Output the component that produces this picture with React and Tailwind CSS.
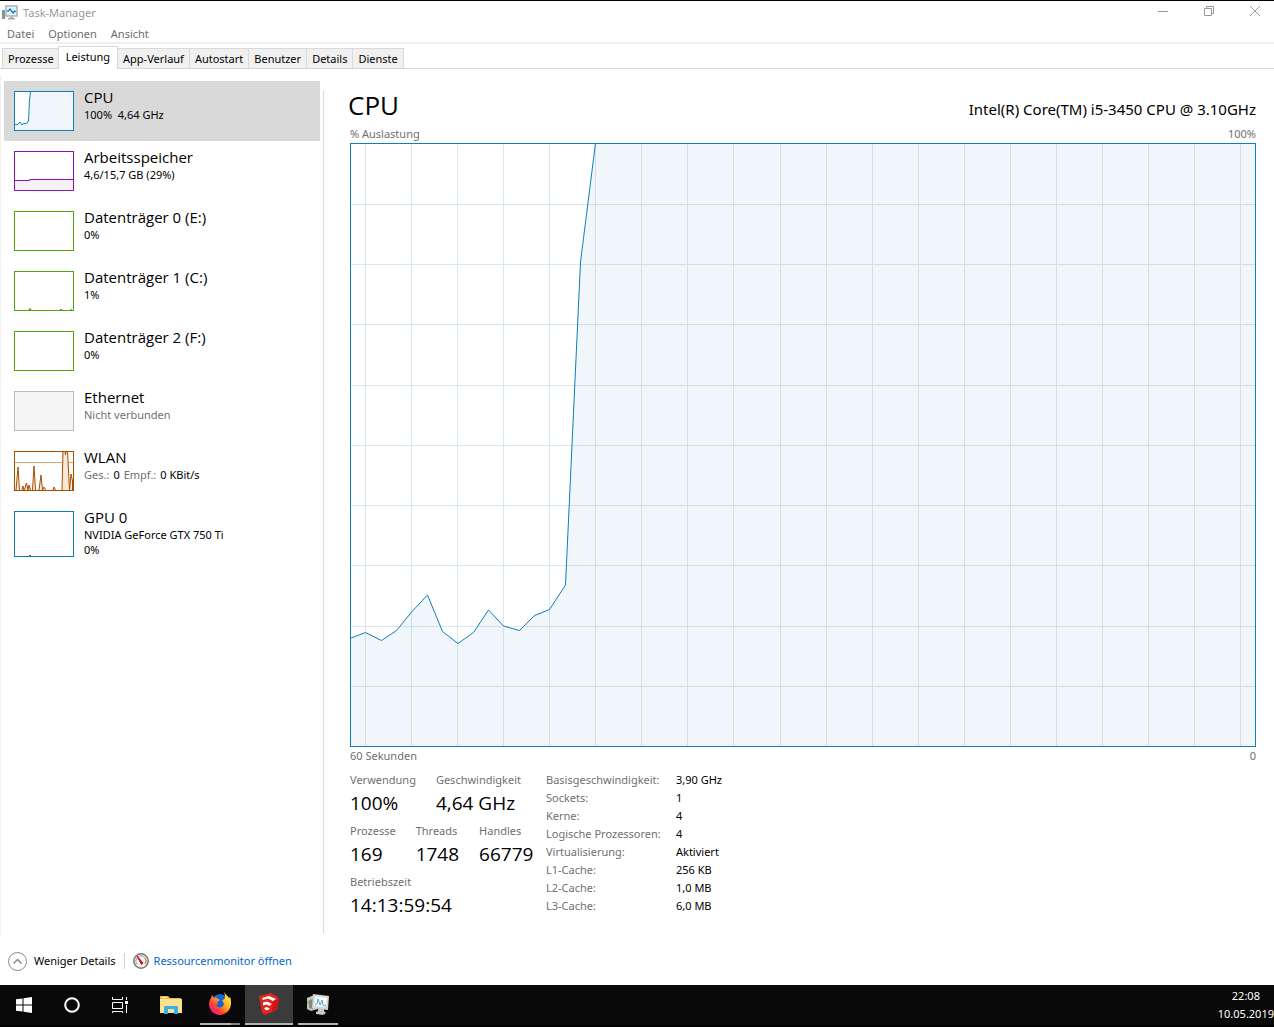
import { useState } from "react";

const tabs = ["Prozesse", "Leistung", "App-Verlauf", "Autostart", "Benutzer", "Details", "Dienste"];

const verticalLines = Array.from({ length: 20 }, (_, i) => Math.floor(14.3 + i * 46.08) + 0.5);
const horizontalLines = Array.from({ length: 9 }, (_, i) => Math.floor(60.3 + i * 60.25) + 0.5);

const cpuLine =
  "0,494 14.5,488.5 30.5,496.5 45.5,486.5 61,467.5 76.5,451 91.5,487.5 107,499.5 122.5,488.5 137.5,466 152.5,482 168.5,486.5 183.5,471.5 198.5,465.5 214.5,441 229.5,118 244.5,-1";

const items = [
  { id: "cpu", title: "CPU", sub: "100%  4,64 GHz", border: "border-[#117dbb]" },
  { id: "ram", title: "Arbeitsspeicher", sub: "4,6/15,7 GB (29%)", border: "border-[#8b12ae]" },
  { id: "disk0", title: "Datenträger 0 (E:)", sub: "0%", border: "border-[#4da60c]" },
  { id: "disk1", title: "Datenträger 1 (C:)", sub: "1%", border: "border-[#4da60c]" },
  { id: "disk2", title: "Datenträger 2 (F:)", sub: "0%", border: "border-[#4da60c]" },
  { id: "eth", title: "Ethernet", sub: "Nicht verbunden", border: "border-[#bcbcbc]", muted: true },
  { id: "wlan", title: "WLAN", border: "border-[#a74f01]" },
  { id: "gpu", title: "GPU 0", sub: "NVIDIA GeForce GTX 750 Ti", extra: "0%", border: "border-[#117dbb]" },
];

const details = [
  ["Basisgeschwindigkeit:", "3,90 GHz"],
  ["Sockets:", "1"],
  ["Kerne:", "4"],
  ["Logische Prozessoren:", "4"],
  ["Virtualisierung:", "Aktiviert"],
  ["L1-Cache:", "256 KB"],
  ["L2-Cache:", "1,0 MB"],
  ["L3-Cache:", "6,0 MB"],
];

const MiniChart = ({ id }) => (
  <svg viewBox="0 0 58 38" className="block h-[38px] w-full" aria-hidden="true">
    {id === "cpu" && (
      <>
        <path d="M0 32L1 31 3 32 5 29 6 32 8 30 9 32 11 31 12 31 13 30 14 29 15 8 16 0H58V38H0Z" fill="#f1f6fa" />
        <path d="M0 32L2 33 5 30 7 33 9 31 10 32 12 31 13.500 29 14.500 8 15.500 0" fill="none" stroke="#117dbb" />
      </>
    )}
    {id === "ram" && (
      <>
        <path d="M0 28.5H14.5V27.5H58V38H0Z" fill="#f4f2f4" />
        <path d="M0 28.5H14.5V27.5H58" fill="none" stroke="#8b12ae" />
      </>
    )}
    {id === "disk1" && <path d="M13.5 38L15 35.5 16.5 38ZM45 38V37H47V38ZM55 38L56 36.5 57 38Z" fill="#4da60c" />}
    {id === "wlan" && (
      <>
        <path d="M0 10.5H58" stroke="#d3a680" />
        <path
          d="M1 38L3 15 4.500 38M7 38L8 34 9 38 10 36 11.500 31 13 38 14 33 15.500 38M17.500 38L19 14 20.500 38M24 38L26 23 27.500 38 29 35 30.500 38M38 38L39 35 40.500 38M47 38L48 -1H50L50.500 3 51 -1H52.500L54.500 38 56 22 57.500 29V38"
          fill="#f8e8d8"
          stroke="#a74f01"
        />
      </>
    )}
    {id === "gpu" && <path d="M14 38V37H16V38Z" fill="#117dbb" />}
  </svg>
);

const CpuGraph = () => (
  <div className="relative min-h-[300px] flex-1 border border-[#117dbb]">
    <svg
      viewBox="0 0 904 602"
      preserveAspectRatio="none"
      className="absolute inset-0 h-full w-full"
      role="img"
      aria-label="CPU % Auslastung"
    >
      <g stroke="#d9e9f3" shapeRendering="crispEdges">
        {verticalLines.map((x) => (
          <line key={x} x1={x} x2={x} y1="0" y2="602" />
        ))}
        {horizontalLines.map((y) => (
          <line key={y} x1="0" x2="904" y1={y} y2={y} />
        ))}
      </g>
      <polygon points={`0,602 ${cpuLine} 904,-1 904,602`} fill="#0f6cae" fillOpacity="0.062" />
      <polyline points={cpuLine} fill="none" stroke="#117dbb" vectorEffect="non-scaling-stroke" />
    </svg>
  </div>
);

const TaskManagerIcon = ({ className }) => (
  <svg viewBox="0 0 16 16" className={className} aria-hidden="true">
    <path d="M0 5H3V14H0Z" fill="#8b9093" />
    <path d="M1 6H2V8H1Z" fill="#5fc04f" />
    <path d="M4 1H15V11H4Z" fill="#e6f4fa" stroke="#a9b1b5" strokeWidth="1.500" />
    <path d="M5 6H6.500L8 4 11 8 12.500 6 14 7" fill="none" stroke="#2089c4" strokeWidth="1.400" />
    <path d="M8 12H11V13H13V14.500H6V13H8Z" fill="#a3a8ab" />
  </svg>
);

const ExplorerIcon = () => (
  <svg viewBox="0 0 22 20" className="h-5 w-[22px]" aria-hidden="true">
    <path d="M0 1H8L10 3H21V18H0Z" fill="#e9b94a" />
    <path d="M0 4H22V18H0Z" fill="#fce18f" />
    <path d="M2 2H7V3H2Z" fill="#fff6d0" />
    <path d="M4 19V12L5 11H17L18 12V19H14V14H8V19Z" fill="#36b0e8" />
  </svg>
);

const FirefoxIcon = () => (
  <svg viewBox="0 0 24 24" className="h-6 w-6" aria-hidden="true">
    <defs>
      <linearGradient id="fox" x1="0.9" y1="0.1" x2="0.15" y2="0.9">
        <stop offset="0" stopColor="#fff044" />
        <stop offset="0.4" stopColor="#ffb020" />
        <stop offset="0.7" stopColor="#ff4a30" />
        <stop offset="1" stopColor="#f0127a" />
      </linearGradient>
    </defs>
    <circle cx="12" cy="11" r="9" fill="#1764d8" />
    <path
      d="M16 0C18 3 20 4 21 6L22 5C24 10 23 15 21 18 18 22 14 23 11 23 5 22 1 18 1 12 1 9 2 7 3 6L4 3 6 6C8 5 9 6 10 7L12 8 9 10 10 12 8 13C9 16 14 16 15 14 17 12 15 10 14 8 17 8 18 5 16 0Z"
      fill="url(#fox)"
    />
  </svg>
);

const SketchupIcon = () => (
  <svg viewBox="0 0 22 24" className="h-6 w-[22px]" aria-hidden="true">
    <path d="M1 4L13 1 21 6 19 18 7 23 4 21Z" fill="#e2231f" />
    <path d="M21 6L19 18 14 20 15 10Z" fill="#c91418" />
    <path d="M4 6L11 4 18 7 15 9 10 6.500 5 8ZM5 10.500L9 9.500 14 12 11 14 9 12.500 5 13.500ZM6 16L9 15 12 17 8 18.500Z" fill="#fff" />
  </svg>
);

const MonitorIcon = () => (
  <svg viewBox="0 0 24 24" className="h-6 w-6" aria-hidden="true">
    <path d="M1 6L8 3 12 17 5 19 1 17Z" fill="#c5c5c5" />
    <path d="M3 8L7 7V17L3 16Z" fill="#858585" />
    <path d="M1 9H3V12H1Z" fill="#80cc42" />
    <path d="M7 2L23 4 22 18 6 16Z" fill="#d6d6d4" />
    <path d="M9 4L21 6 20 15 8 14Z" fill="#f6fbfd" />
    <path d="M9 13L11 12 12 7 14 13 16 8 17 13 20 14" fill="none" stroke="#57a5cf" />
    <path d="M12 17L18 17 18 19 20 21 17 23 10 22 10 20 12 19Z" fill="#c8c8c8" />
  </svg>
);

const Stat = ({ label, value }) => (
  <div>
    <dt className="leading-[18px] text-[#707070]">{label}</dt>
    <dd className="mt-[2px] font-['Open_Sans',sans-serif] text-[19px] leading-6">{value}</dd>
  </div>
);

const App = () => {
  const [activeTab, setActiveTab] = useState("Leistung");
  const [selected, setSelected] = useState("cpu");

  return (
    <div className="flex min-h-screen flex-col border-t border-black bg-white font-['Noto_Sans',sans-serif] text-[11px] leading-[18px] text-black">
      {/* Title bar */}
      <header className="flex h-6 items-center pl-[2px] text-[#999]">
        <TaskManagerIcon className="h-4 w-4" />
        <h1 className="ml-[5px] flex-1 text-[11px]">Task-Manager</h1>
        <div className="flex gap-4 self-start pr-1">
          <button aria-label="Minimieren" className="flex h-5 w-[30px] items-center justify-center">
            <svg viewBox="0 0 10 10" className="h-[10px] w-[10px]" stroke="#999">
              <path d="M0 5.500H10" />
            </svg>
          </button>
          <button aria-label="Verkleinern" className="flex h-5 w-[30px] items-center justify-center">
            <svg viewBox="0 0 10 10" className="h-[10px] w-[10px]" fill="none" stroke="#999">
              <path d="M0.500 2.500H7.500V9.500H0.500ZM2.500 2.500V0.500H9.500V7.500H7.500" />
            </svg>
          </button>
          <button aria-label="Schließen" className="flex h-5 w-[30px] items-center justify-center">
            <svg viewBox="0 0 10 10" className="h-[10px] w-[10px]" stroke="#999">
              <path d="M0 0L10 10M10 0L0 10" />
            </svg>
          </button>
        </div>
      </header>

      {/* Menu */}
      <nav className="flex h-[19px] items-center gap-[14px] border-b-2 border-[#f0f0f0] pl-[7px] text-[#6d6d6d]">
        <button>Datei</button>
        <button>Optionen</button>
        <button>Ansicht</button>
      </nav>

      {/* Tabs */}
      <div role="tablist" className="flex h-[25px] items-end border-b border-[#d9d9d9] pl-[2px]">
        {tabs.map((tab) => (
          <button
            key={tab}
            role="tab"
            aria-selected={activeTab === tab}
            onClick={() => setActiveTab(tab)}
            className={
              activeTab === tab
                ? "relative -mb-px -ml-[2px] h-[23px] border border-b-0 border-[#d9d9d9] bg-white px-[7px] pb-[2px]"
                : "h-5 border-t border-r border-[#d9d9d9] bg-[#f0f0f0] px-[5px] first:border-l"
            }
          >
            {tab}
          </button>
        ))}
      </div>

      <main className="mt-[6px] flex flex-1 border-l border-[#f0f0f0]">
        {/* Devices */}
        <aside className="w-[319px] shrink-0 pt-[6px] pl-[3px]">
          {items.map((item) => (
            <button
              key={item.id}
              onClick={() => setSelected(item.id)}
              className={`flex min-h-[60px] w-full items-start gap-[10px] pt-[10px] pl-[10px] text-left ${
                selected === item.id ? "bg-[#d9d9d9]" : ""
              }`}
            >
              <span
                className={`flex w-[60px] shrink-0 items-end border ${item.extra ? "h-[46px]" : "h-10"} ${item.border} ${
                  item.muted ? "bg-[#f5f5f5]" : "bg-white"
                }`}
              >
                <MiniChart id={item.id} />
              </span>
              <span className="flex flex-col whitespace-pre">
                <span className="-mt-1 font-['Open_Sans',sans-serif] text-[15px] leading-5">{item.title}</span>
                <span className={`leading-[15px] ${item.muted ? "text-[#707070]" : ""}`}>
                  {item.sub || (
                    <span className="flex gap-1">
                      <span className="text-[#707070]">Ges.:</span>
                      <span>0</span>
                      <span className="text-[#707070]">Empf.:</span>
                      <span>0 KBit/s</span>
                    </span>
                  )}
                </span>
                {item.extra && <span className="leading-[15px]">{item.extra}</span>}
              </span>
            </button>
          ))}
        </aside>

        {/* CPU details */}
        <section className="mt-4 mb-1 ml-[3px] flex flex-1 flex-col border-l border-[#d9d9d9] pr-[18px] pl-[26px]">
          <div className="flex h-[34px] items-start justify-between">
            <h2 className="-ml-[2px] font-['Open_Sans',sans-serif] text-[26px] leading-7">CPU</h2>
            <p className="pt-[9px] text-[15px]">Intel(R) Core(TM) i5-3450 CPU @ 3.10GHz</p>
          </div>
          <div className="flex justify-between text-[#707070]">
            <span>% Auslastung</span>
            <span>100%</span>
          </div>
          <CpuGraph />
          <div className="flex justify-between text-[#707070]">
            <span>60 Sekunden</span>
            <span>0</span>
          </div>

          <div className="mt-[6px] flex h-[162px] items-start">
            <div className="flex w-[196px] flex-col gap-[7px]">
              <dl className="flex gap-5">
                <Stat label="Verwendung" value="100%" />
                <Stat label="Geschwindigkeit" value="4,64 GHz" />
              </dl>
              <dl className="flex gap-5">
                <Stat label="Prozesse" value="169" />
                <Stat label="Threads" value="1748" />
                <Stat label="Handles" value="66779" />
              </dl>
              <dl>
                <Stat label="Betriebszeit" value="14:13:59:54" />
              </dl>
            </div>
            <table>
              <tbody>
                {details.map(([label, value]) => (
                  <tr key={label}>
                    <th scope="row" className="w-[130px] p-0 text-left font-normal text-[#707070]">
                      {label}
                    </th>
                    <td className="p-0">{value}</td>
                  </tr>
                ))}
              </tbody>
            </table>
          </div>
        </section>
      </main>

      {/* Footer */}
      <footer className="flex h-12 items-center pl-2">
        <button className="flex items-center gap-[7px]">
          <svg viewBox="0 0 19 19" className="h-[19px] w-[19px]" fill="none" stroke="#8a8a8a" aria-hidden="true">
            <circle cx="9.5" cy="9.5" r="9" />
            <path d="M5.500 11.500L9.500 7.500 13.500 11.500" strokeWidth="1.500" />
          </svg>
          Weniger Details
        </button>
        <span className="mx-2 h-4 w-px bg-[#d0d0d0]" />
        <a href="#resmon" className="flex items-center gap-[5px] text-[#0066cc]">
          <svg viewBox="0 0 16 16" className="h-4 w-4" aria-hidden="true">
            <circle cx="8" cy="8" r="7.200" fill="#f4f4f4" stroke="#777" strokeWidth="1.500" />
            <path d="M4 11A5 5 0 1 1 12 11" fill="none" stroke="#9a9a9a" />
            <path d="M12 5A5 5 0 0 1 12 11" fill="none" stroke="#e38b52" />
            <path d="M4 3L10 10 8.500 11.500Z" fill="#d01018" stroke="#d01018" />
          </svg>
          Ressourcenmonitor öffnen
        </a>
      </footer>

      {/* Taskbar */}
      <div className="flex h-[42px] items-stretch justify-between border-b-2 border-black bg-[#090909] text-white">
        <div className="flex">
          <button aria-label="Start" className="flex w-12 items-center justify-center">
            <svg viewBox="0 0 16 16" className="h-4 w-4" fill="#fff">
              <path d="M0 2.300L6.500 1.400V7.500H0ZM7.500 1.200L16 0V7.500H7.500ZM0 8.500H6.500V14.600L0 13.700ZM7.500 8.500H16V16L7.500 14.800Z" />
            </svg>
          </button>
          <button aria-label="Cortana" className="flex w-12 items-center justify-center">
            <svg viewBox="0 0 16 16" className="h-4 w-4" fill="none" stroke="#fff" strokeWidth="2">
              <circle cx="8" cy="8" r="6.800" />
            </svg>
          </button>
          <button aria-label="Taskansicht" className="flex w-12 items-center justify-center">
            <svg viewBox="0 0 16 16" className="h-4 w-4" fill="none" stroke="#fff">
              <path d="M0.500 0V2.500H10.500V0M0.500 5.500H10.500V11.500H0.500ZM0.500 16V14.500H10.500V16M14.500 0V3M14.500 8V16" />
              <path d="M13 4H16V7H13Z" fill="#fff" stroke="none" />
            </svg>
          </button>
          <button aria-label="Explorer" className="flex w-[54px] items-center justify-center">
            <ExplorerIcon />
          </button>
          <button aria-label="Firefox" className="relative ml-[2px] flex w-10 items-center justify-center border-b-2 border-[#b4b4b4]">
            <FirefoxIcon />
            <span className="absolute right-0 -bottom-[2px] h-[2px] w-[9px] bg-[#858585]" />
          </button>
          <button aria-label="SketchUp" className="ml-[5px] flex w-12 items-center justify-center border-b-2 border-[#b4b4b4] bg-[#3b3b3b]">
            <SketchupIcon />
          </button>
          <button aria-label="Task-Manager" className="ml-[5px] flex w-10 items-center justify-center border-b-2 border-[#b4b4b4]">
            <MonitorIcon />
          </button>
        </div>
        <div className="flex flex-col items-center pt-[2px]">
          <time>22:08</time>
          <time>10.05.2019</time>
        </div>
      </div>
    </div>
  );
};

export default App;
